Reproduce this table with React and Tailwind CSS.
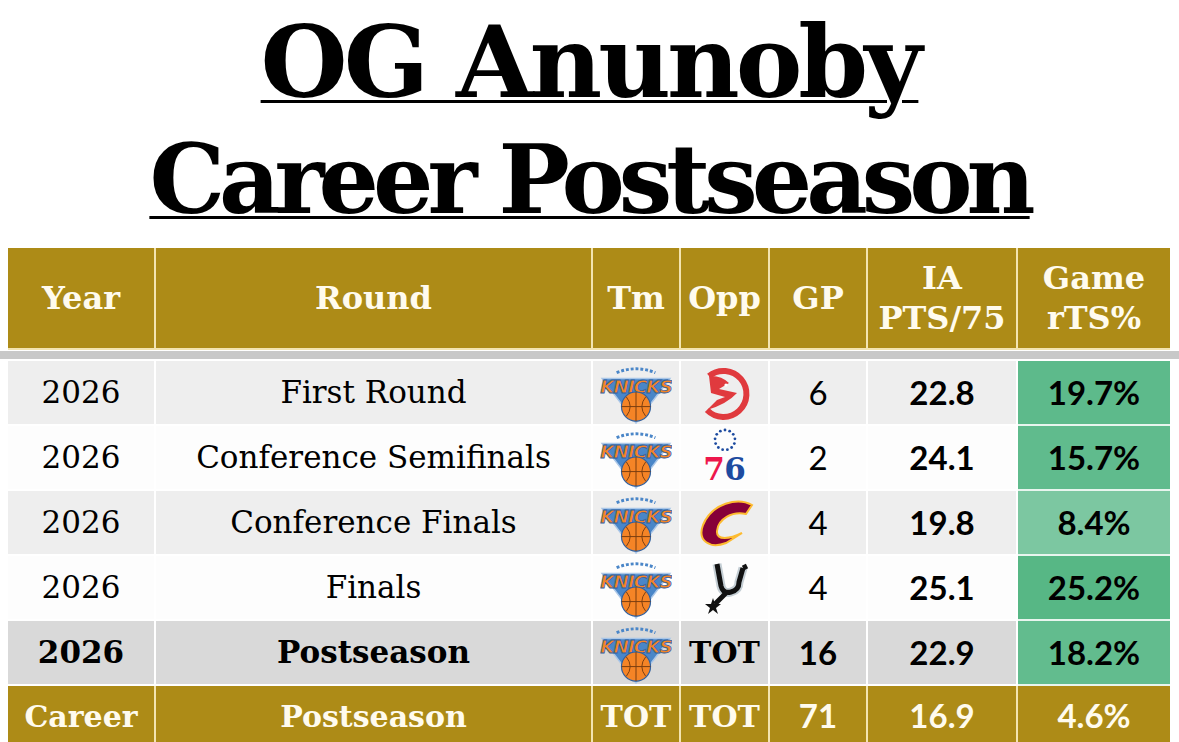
import React from "react";

function Knicks() {
  return (
    <svg width="72" height="62" viewBox="0 0 72 64">
      <polygon points="1,17 71,17 36,63" fill="#4a86c8" stroke="#a9c6e8" strokeWidth="1.5" />
      <path d="M16 11 Q36 3 56 11" fill="none" stroke="#4a86c8" strokeWidth="3" strokeDasharray="3 2" />
      <text
        x="36"
        y="32"
        textAnchor="middle"
        fontFamily="'DejaVu Sans', sans-serif"
        fontWeight="bold"
        fontStyle="italic"
        fontSize="19"
        fill="#f58426"
        stroke="#2f5f9e"
        strokeWidth="0.8"
        letterSpacing="-1"
      >
        KNICKS
      </text>
      <circle cx="36" cy="46" r="15" fill="#f58426" stroke="#2f5f9e" strokeWidth="1.2" />
      <path d="M21 46 H51 M36 31 V61 M26 36 Q34 46 26 56 M46 36 Q38 46 46 56" fill="none" stroke="#7a3d10" strokeWidth="1" />
    </svg>
  );
}

function Hawks() {
  return (
    <svg width="60" height="60" viewBox="0 0 60 60">
      <path d="M14 13 A23 23 0 1 1 12 47" fill="none" stroke="#e03a3e" strokeWidth="6" />
      <path d="M14 13 Q26 12 34 20 L24 26 L42 30 Q32 41 12 47 L22 37 L30 34 L16 30 Z" fill="#e03a3e" />
      <circle cx="31" cy="22" r="1.6" fill="#fff" />
    </svg>
  );
}

function Sixers() {
  const stars = Array.from({ length: 13 }, (_, i) => {
    const a = (i / 13) * Math.PI * 2 - Math.PI / 2;
    return [30 + Math.cos(a) * 10, 13 + Math.sin(a) * 10];
  });
  return (
    <svg width="60" height="62" viewBox="0 0 60 62">
      {stars.map(([x, y], i) => (
        <circle key={i} cx={x} cy={y} r="1.4" fill="#1d4ba0" />
      ))}
      <text x="19" y="53" textAnchor="middle" fontFamily="'DejaVu Serif', serif" fontWeight="bold" fontSize="31" fill="#ed174c">
        7
      </text>
      <text x="40" y="53" textAnchor="middle" fontFamily="'DejaVu Serif', serif" fontWeight="bold" fontSize="31" fill="#1d4ba0">
        6
      </text>
    </svg>
  );
}

function Cavs() {
  return (
    <svg width="62" height="56" viewBox="0 0 62 56">
      <path
        d="M58 10 C44 2 18 8 9 30 C3 46 16 54 32 48 L48 38 C36 44 22 46 23 36 C24 24 38 16 52 19 Z"
        fill="#860038"
        stroke="#fdbb30"
        strokeWidth="2"
      />
    </svg>
  );
}

function Spurs() {
  const spur = "M18 6 L22 28 Q24 36 32 34 Q40 32 40 24 L44 10";
  return (
    <svg width="52" height="60" viewBox="0 0 52 60">
      <path d={spur} fill="none" stroke="#c4ced4" strokeWidth="9" strokeLinejoin="round" />
      <path d={spur} fill="none" stroke="#111" strokeWidth="5" strokeLinejoin="round" />
      <path d="M44 10 L48 8" stroke="#111" strokeWidth="5" />
      <path d="M27 35 L16 46" stroke="#111" strokeWidth="5" />
      <polygon points="14,40 16,46 22,46 17,50 19,56 14,52 9,56 11,50 6,46 12,46" fill="#111" />
    </svg>
  );
}

const logos = { NYK: <Knicks />, ATL: <Hawks />, PHI: <Sixers />, CLE: <Cavs />, SAS: <Spurs /> };

const rows = [
  { year: "2026", round: "First Round", opp: "ATL", gp: "6", pts: "22.8", rts: "19.7%", bg: "bg-[#eeeeee]", g: "bg-[#5dba8b]" },
  { year: "2026", round: "Conference Semifinals", opp: "PHI", gp: "2", pts: "24.1", rts: "15.7%", bg: "bg-[#fdfdfd]", g: "bg-[#60bb8d]" },
  { year: "2026", round: "Conference Finals", opp: "CLE", gp: "4", pts: "19.8", rts: "8.4%", bg: "bg-[#eeeeee]", g: "bg-[#7cc7a1]" },
  { year: "2026", round: "Finals", opp: "SAS", gp: "4", pts: "25.1", rts: "25.2%", bg: "bg-[#fdfdfd]", g: "bg-[#57b785]" },
  { year: "2026", round: "Postseason", opp: "TOT", gp: "16", pts: "22.9", rts: "18.2%", bg: "bg-[#d9d9d9]", g: "bg-[#62bc8e]", total: true },
];

const cols = "grid grid-cols-[148px_437px_88px_89px_98px_150px_152px] ml-[8px] w-[1162px]";
const cell = "flex items-center justify-center border-r-2 border-b-2 border-white";
const sans = "font-['Lato','Liberation_Sans',sans-serif]";
const gold = "flex items-center justify-center border-r-2 border-[#f3e4b0]";

export default function App() {
  return (
    <div className="w-[1179px] h-[742px] bg-white overflow-hidden font-['DejaVu_Serif','Liberation_Serif',serif]">
      <div className="pt-[3px] h-[248px] text-center text-black font-bold">
        <div className="text-[100px] leading-[118px] tracking-[-4px]">
          <span className="underline decoration-[3px] underline-offset-[3px]">OG Anunoby</span>
        </div>
        <div className="text-[95px] leading-[118px] tracking-[-6px]">
          <span className="underline decoration-[3px] underline-offset-[3px]">Career Postseason</span>
        </div>
      </div>

      <div className={`${cols} h-[102px] bg-[#ad8b17] text-[#fffbee] text-[32px] font-bold`}>
        {["Year", "Round", "Tm", "Opp", "GP"].map((h) => (
          <div key={h} className="flex items-center justify-center border-r-2 border-b-2 border-[#f3e4b0]">
            {h}
          </div>
        ))}
        <div className="flex flex-col items-center justify-center leading-[40px] border-r-2 border-b-2 border-[#f3e4b0]">
          <span>IA</span>
          <span>PTS/75</span>
        </div>
        <div className="flex flex-col items-center justify-center leading-[40px] border-b-2 border-[#f3e4b0]">
          <span>Game</span>
          <span>rTS%</span>
        </div>
      </div>
      <div className="mt-[1px] h-[8px] w-full bg-[#c8c8c8]" />
      <div className="h-[2px]" />

      {rows.map((r, i) => (
        <div key={i} className={`${cols} h-[65px] text-black`}>
          <div className={`${cell} ${r.bg} text-[31px] ${r.total ? "font-bold" : ""}`}>{r.year}</div>
          <div className={`${cell} ${r.bg} text-[31px] ${r.total ? "font-bold" : ""}`}>{r.round}</div>
          <div className={`${cell} ${r.bg}`}>
            <Knicks />
          </div>
          <div className={`${cell} ${r.bg} text-[30px] font-bold`}>{logos[r.opp] || r.opp}</div>
          <div className={`${cell} ${r.bg} ${sans} text-[33px] ${r.total ? "font-bold" : ""}`}>{r.gp}</div>
          <div className={`${cell} ${r.bg} ${sans} text-[33px] font-bold`}>{r.pts}</div>
          <div className={`flex items-center justify-center border-b-2 border-[#e8f5ee] ${r.g} ${sans} text-[33px] font-bold`}>
            {r.rts}
          </div>
        </div>
      ))}

      <div className={`${cols} h-[60px] bg-[#ad8b17] text-[#fffbee] font-bold`}>
        <div className={`${gold} text-[30px]`}>Career</div>
        <div className={`${gold} text-[30px]`}>Postseason</div>
        <div className={`${gold} text-[30px]`}>TOT</div>
        <div className={`${gold} text-[30px]`}>TOT</div>
        <div className={`${gold} ${sans} text-[33px]`}>71</div>
        <div className={`${gold} ${sans} text-[33px]`}>16.9</div>
        <div className={`flex items-center justify-center ${sans} text-[33px]`}>4.6%</div>
      </div>
    </div>
  );
}
